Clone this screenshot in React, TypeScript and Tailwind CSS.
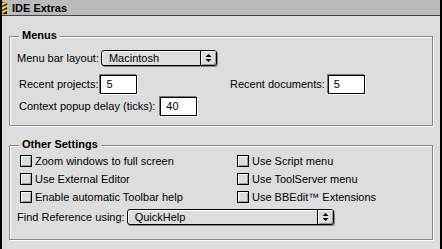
import React from "react"

function Arrows() {
    return (
        <svg width="7" height="10" viewBox="0 0 7 10">
            <polygon points="0.5,4 3.5,1 6.5,4" fill="#000" />
            <polygon points="0.5,6 6.5,6 3.5,9" fill="#000" />
        </svg>
    )
}

function Popup({ value, width }: { value: string; width: string }) {
    return (
        <div className={`${width} h-[16px] flex border border-black rounded-[3px] bg-[#ddd] shadow-[1px_1px_0_#888,inset_1px_1px_0_#fff]`}>
            <span className="flex-1 pl-[7px] leading-[14px]">{value}</span>
            <div className="w-[16px] flex items-center justify-center border-l border-black shadow-[inset_1px_1px_0_#fff,inset_-1px_-1px_0_#999] rounded-r-[2px]">
                <Arrows />
            </div>
        </div>
    )
}

function Field({ value, width }: { value: string; width: string }) {
    return (
        <div className={`${width} h-[19px] bg-white border border-black pl-[5px] leading-[17px] shadow-[-1px_-1px_0_#777,1px_1px_0_#fff]`}>
            {value}
        </div>
    )
}

function Check({ label }: { label: string }) {
    return (
        <div className="h-[18px] flex items-center gap-[3px]">
            <div className="w-[12px] h-[12px] border border-black bg-[#ddd] shadow-[inset_1px_1px_0_#fff,inset_-1px_-1px_0_#999]" />
            <span>{label}</span>
        </div>
    )
}

function GroupBox({ title, height, children }: { title: string; height: string; children: React.ReactNode }) {
    return (
        <div className={`relative ${height} border border-[#888] shadow-[1px_1px_0_#fff,inset_1px_1px_0_#fff]`}>
            <span className="absolute left-[9px] top-[-8px] px-[3px] bg-[#ddd] font-bold leading-[12px]">{title}</span>
            {children}
        </div>
    )
}

export default function App() {
    return (
        <div className="w-[442px] h-[249px] bg-[#ddd] border-l-2 border-r-2 border-black flex flex-col text-[11px] text-black font-['Liberation_Sans',Arial,sans-serif] overflow-hidden">
            <div className="h-[16px] shrink-0 bg-[#bbb] border-b border-[#444] flex items-center">
                <svg width="5" height="12" viewBox="0 0 5 12" className="shrink-0">
                    <rect width="5" height="12" fill="#000" />
                    <polygon points="0,1 3,0 5,0 5,1 0,4" fill="#f2d21c" />
                    <polygon points="0,5 5,3 5,5 0,8" fill="#f2d21c" />
                    <polygon points="0,9 5,7 5,9 0,12" fill="#f2d21c" />
                </svg>
                <span className="ml-[5px] font-bold leading-[14px]">IDE Extras</span>
            </div>

            <div className="px-[7px] pt-[20px]">
                <GroupBox title="Menus" height="h-[90px]">
                    <div className="mt-[13px] pl-[7px] flex items-center gap-[2px]">
                        <span>Menu bar layout:</span>
                        <Popup value="Macintosh" width="w-[116px]" />
                    </div>
                    <div className="mt-[8px] pl-[9px] flex items-center">
                        <div className="w-[211px] flex items-center gap-[2px]">
                            <span>Recent projects:</span>
                            <Field value="5" width="w-[37px]" />
                        </div>
                        <div className="flex items-center gap-[3px]">
                            <span>Recent documents:</span>
                            <Field value="5" width="w-[37px]" />
                        </div>
                    </div>
                    <div className="mt-[3px] pl-[9px] flex items-center gap-[5px]">
                        <span>Context popup delay (ticks):</span>
                        <Field value="40" width="w-[37px]" />
                    </div>
                </GroupBox>

                <div className="mt-[19px]">
                    <GroupBox title="Other Settings" height="h-[95px]">
                        <div className="mt-[6px] pl-[10px] grid grid-cols-[217px_1fr]">
                            <Check label="Zoom windows to full screen" />
                            <Check label="Use Script menu" />
                            <Check label="Use External Editor" />
                            <Check label="Use ToolServer menu" />
                            <Check label="Enable automatic Toolbar help" />
                            <Check label="Use BBEdit™ Extensions" />
                        </div>
                        <div className="mt-[3px] pl-[7px] flex items-center gap-[2px]">
                            <span>Find Reference using:</span>
                            <Popup value="QuickHelp" width="w-[207px]" />
                        </div>
                    </GroupBox>
                </div>
            </div>
        </div>
    )
}
